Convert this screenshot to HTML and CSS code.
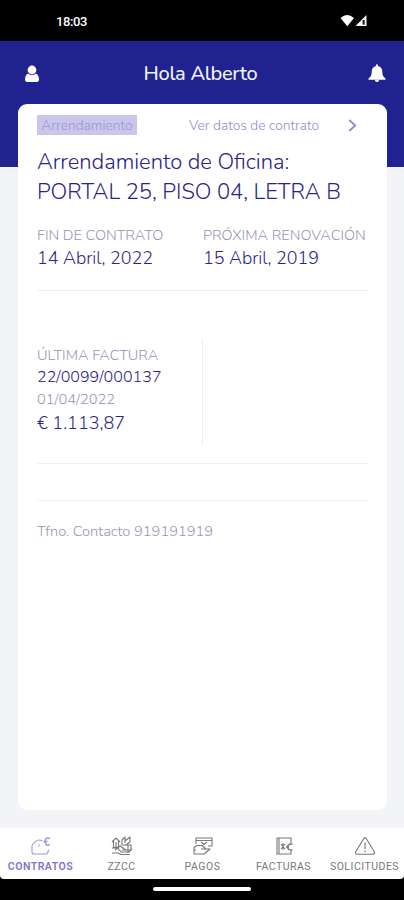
FILE: index.html
```html
<!DOCTYPE html>
<html lang="es">
<head>
<meta charset="utf-8">
<title>Contratos</title>
<link rel="stylesheet" href="styles.css">
</head>
<body>
<div class="status">
  <span class="time">18:03</span>
  <svg class="signals" width="28" height="14" viewBox="0 0 28 14"><path d="M.5 4Q7-2 14 4L7.3 12.3Z" fill="#fff"/><path d="M15.5 12L26.500 1V12Z" fill="#fff"/><path d="M22.600 6H24.600V10.700H22.600Z" fill="#111"/></svg>
</div>
<main class="screen">
  <header class="header">
    <svg width="16" height="18" viewBox="0 0 16 18" fill="#fff"><circle cx="8" cy="5" r="4.4"/><path d="M4 8.5Q8 12 12 8.5Q15 10 15 14.5Q15 17 12.5 17H3.500Q1 17 1 14.500Q1 10 4 8.500Z"/></svg>
    <h1 class="greeting">Hola Alberto</h1>
    <svg width="18" height="19" viewBox="0 0 18 19" fill="#fff"><path d="M8 .5H10V2Q14.300 3 14.300 8Q14.300 12.500 17.500 14.500V15.800H.500V14.500Q3.700 12.500 3.700 8Q3.700 3 8 2Z"/><path d="M6.800 15.800H11.200Q11 18 9 18Q7 18 6.800 15.800Z"/></svg>
  </header>
  <section class="card">
    <div class="top">
      <span class="tag">Arrendamiento</span>
      <a class="link">Ver datos de contrato</a>
      <svg class="chevron" width="9" height="13" viewBox="0 0 9 13" fill="none" stroke="#8c87cf" stroke-width="1.700"><path d="M1.300 1L7.300 6.500L1.300 12"/></svg>
    </div>
    <h2 class="title">Arrendamiento de Oficina:<br>PORTAL 25, PISO 04, LETRA B</h2>
    <div class="dates">
      <div><div class="label">FIN DE CONTRATO</div><div class="date">14 Abril, 2022</div></div>
      <div><div class="label">PRÓXIMA RENOVACIÓN</div><div class="date">15 Abril, 2019</div></div>
    </div>
    <div class="invoice">
      <div class="bill">
        <div class="label">ÚLTIMA FACTURA</div>
        <div class="number">22/0099/000137</div>
        <div class="day">01/04/2022</div>
        <div class="amount">€ 1.113,87</div>
      </div>
    </div>
    <div class="spacer"></div>
    <div class="contact">Tfno. Contacto 919191919</div>
  </section>
</main>
<nav class="tabs">
  <a class="tab active"><svg width="22" height="20" viewBox="0 0 22 20"><path d="M12.500 5Q8 2.500 4.500 6.500L2 9.500V16Q2 18 4 18H16Q18 18 18.500 13.500M9 8.500V10.500"/><path class="euro" d="M20 2.500Q15.500 .5 15 5.500Q15.500 10.500 20 8.500M13.500 5.500H17.500"/></svg><span>CONTRATOS</span></a>
  <a class="tab"><svg width="22" height="20" viewBox="0 0 22 20"><path d="M1 6L5 2L9 6M2.500 5V12H7.500V5M5 11V6M11 8V4L14 1V7M14 5L19 1V6L15 9M10 9H20V14H11M1 12L6 11L10 16H18L21 13M1 17H7L10 18.500H19M4 14L9 10L15 14M17 9V17"/></svg><span>ZZCC</span></a>
  <a class="tab"><svg width="22" height="20" viewBox="0 0 22 20"><path d="M4 8V2H20V10H16M4 4.500H20M9 6L12 8.500L15 6M2 18V11.500L5 9.500H10L14 13H9M2 18H12L18 13H14M2 14H4"/></svg><span>PAGOS</span></a>
  <a class="tab"><svg width="22" height="20" viewBox="0 0 22 20"><path d="M18 7V2H4V18H18V15M6 2V18M8 8L12 13M12 8L8 13M10 7V14"/><path class="euro" d="M19.500 8Q15 7.500 14.500 11Q15 14.500 19.500 14M13 11H16"/></svg><span>FACTURAS</span></a>
  <a class="tab"><svg width="22" height="20" viewBox="0 0 22 20"><path d="M9.800 2.500L1.600 16Q1 18 3 18.300H19Q21 18 20.400 16L12.200 2.500Q11 .8 9.800 2.500ZM11 6.500V13M11 14.500V16.500"/></svg><span>SOLICITUDES</span></a>
</nav>
<div class="gesture"><div class="pill"></div></div>
</body>
</html>
```
FILE: styles.css
```css
* { box-sizing: border-box; }
body { margin: 0; width: 404px; height: 900px; overflow: hidden; display: flex; flex-direction: column; background: #000; font-family: Nunito, "Open Sans", sans-serif; font-weight: 300; color: #2a2486; }
.status { height: 41px; flex: none; display: flex; justify-content: space-between; align-items: center; padding: 2px 36px 0 56px; color: #fff; }
.time { font: 500 13px/18px Roboto, sans-serif; letter-spacing: -.4px; }
.signals { margin-top: -1px; }
.screen { height: 787px; flex: none; background: linear-gradient(#20228f 0 126px, #f2f4f7 126px); padding: 0 17px 18px 18px; display: flex; flex-direction: column; }
.header { height: 63px; flex: none; display: flex; align-items: center; justify-content: space-between; padding: 2px 1px 0 6px; }
.greeting { margin: 0 7px 0 0; font-size: 20px; font-weight: 500; line-height: 28px; color: #f1f1ff; letter-spacing: -.3px; }
.card { flex: 1; background: #fff; border-radius: 9px; padding: 11px 19px; }
.top { display: flex; align-items: center; height: 20px; font-size: 13.800px; }
.tag { width: 100px; height: 20px; line-height: 21px; text-align: center; background: #c9c5eb; color: #9c95d0; white-space: nowrap; }
.link { margin-left: 52px; width: 131px; line-height: 20px; padding-top: 1px; color: #938dca; white-space: nowrap; }
.chevron { margin-left: 28px; margin-top: 1px; }
.title { margin: 13px 0 0; font-size: 21.950px; line-height: 29.500px; font-weight: 300; white-space: nowrap; }
.dates { display: grid; grid-template-columns: 166px 1fr; height: 68px; margin-top: 16px; border-bottom: 1px solid #eeeef2; white-space: nowrap; }
.label { font-size: 14.550px; line-height: 22px; padding-top: 1px; color: #9694b4; }
.date { font-size: 17.900px; line-height: 24px; }
.invoice { height: 173px; padding-top: 47px; border-bottom: 1px solid #f1f1f4; }
.bill { width: 166px; height: 108px; padding-top: 5px; border-right: 1px solid #eeeef2; white-space: nowrap; }
.number { font-size: 16.100px; line-height: 23px; }
.day { font-size: 14.650px; line-height: 21px; color: #9694b4; }
.amount { font-size: 18px; line-height: 26px; }
.spacer { height: 37px; border-bottom: 1px solid #f1f1f4; }
.contact { margin-top: 19px; font-size: 14.650px; line-height: 22px; color: #9694b4; }
.tabs { height: 51px; flex: none; background: #fff; display: grid; grid-template-columns: repeat(5, 81px); border-radius: 0 0 4px 4px; }
.tab { display: flex; flex-direction: column; align-items: center; padding-top: 8px; font: 400 10.500px/14px Roboto, sans-serif; letter-spacing: .5px; color: #77777c; white-space: nowrap; }
.tab svg { fill: none; stroke: #77777c; stroke-width: 1.100; stroke-linejoin: round; margin-bottom: 4px; }
.tab .euro { stroke-width: 1.500; }
.active { color: #7d75cf; font-weight: 600; }
.active svg { stroke: #9c96dd; }
.gesture { height: 21px; display: flex; justify-content: center; padding-top: 8px; }
.pill { width: 98px; height: 4px; border-radius: 2px; background: #fff; }
```
